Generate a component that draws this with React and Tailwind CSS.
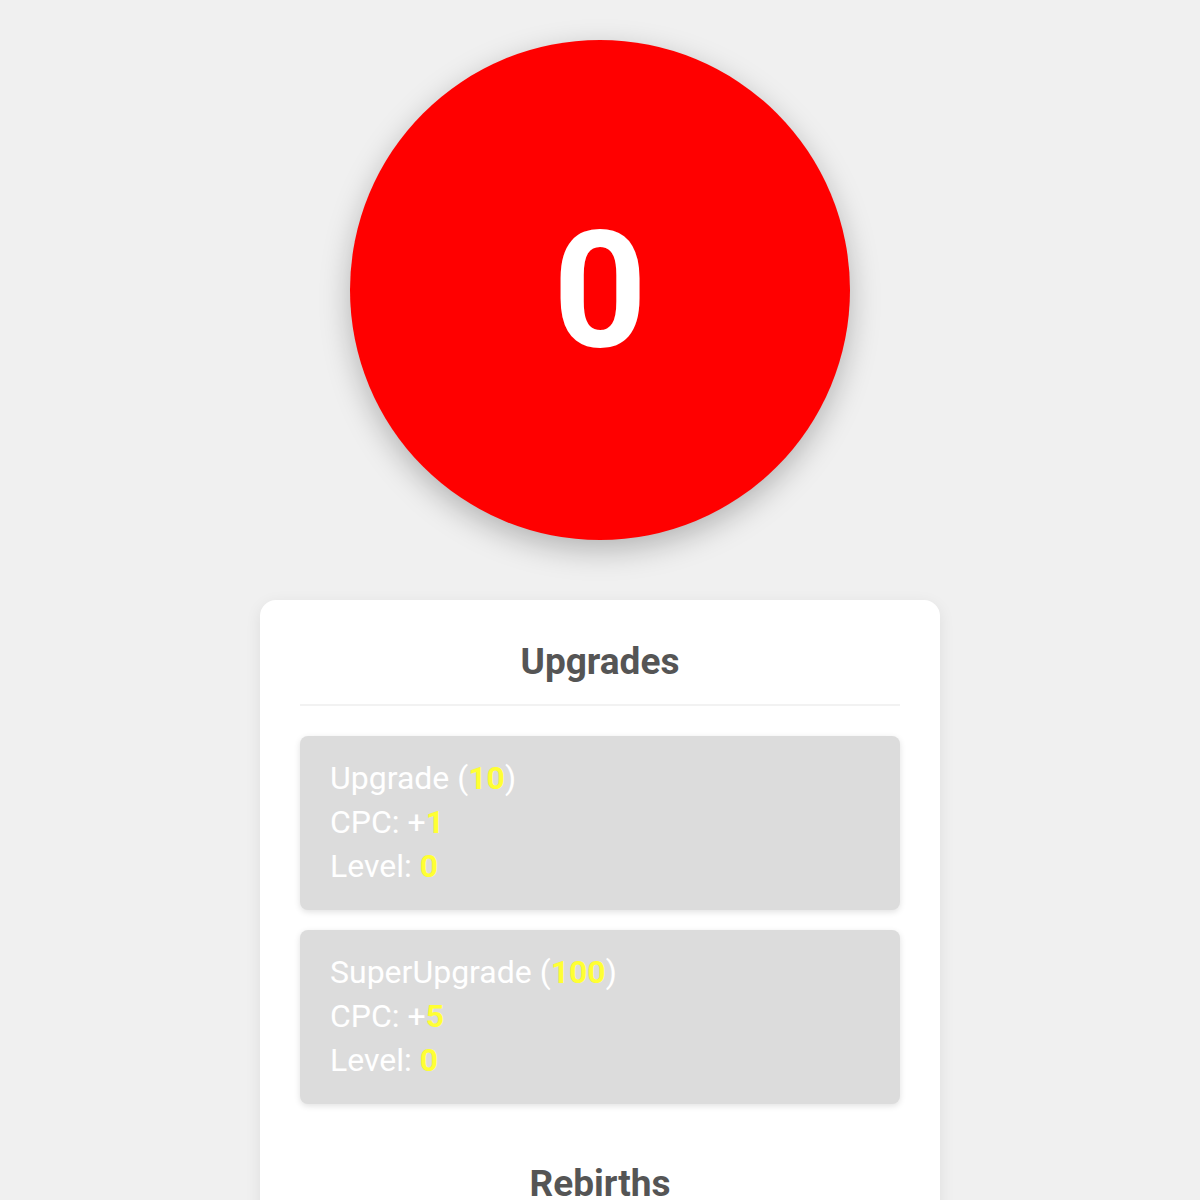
import React from 'react';

const UpgradeBox = ({ name, cost, cpc, level }) => (
    <div className="bg-[#dcdcdc] rounded-lg px-[30px] pt-[20px] pb-[22px] text-white text-[32px] leading-[44px] shadow-[0_2px_6px_rgba(0,0,0,0.12)]">
        <div>
            {name} (<span className="font-bold text-[#ffff33]">{cost}</span>)
        </div>
        <div>
            CPC: +<span className="font-bold text-[#ffff33]">{cpc}</span>
        </div>
        <div>
            Level: <span className="font-bold text-[#ffff33]">{level}</span>
        </div>
    </div>
);

export default function App() {
    return (
        <div
            className="min-h-screen bg-[#f0f0f0] flex flex-col items-center pt-[40px] pb-10"
            style={{ fontFamily: 'Roboto, "Liberation Sans", sans-serif' }}
        >
            <button className="w-[500px] h-[500px] rounded-full bg-[#ff0000] flex items-center justify-center shadow-[0_10px_30px_rgba(0,0,0,0.25)]">
                <span className="text-white font-bold text-[164px] leading-none">0</span>
            </button>

            <div className="mt-[60px] w-[680px] bg-white rounded-2xl shadow-[0_4px_16px_rgba(0,0,0,0.08)] px-[40px] pt-[40px] pb-10">
                <h2 className="text-[37px] font-bold text-[#555555] text-center leading-[44px] pb-[20px] border-b-2 border-[#f2f2f2]">
                    Upgrades
                </h2>
                <div className="mt-[30px] flex flex-col gap-[20px]">
                    <UpgradeBox name="Upgrade" cost="10" cpc="1" level="0" />
                    <UpgradeBox name="SuperUpgrade" cost="100" cpc="5" level="0" />
                </div>
                <h2 className="mt-[58px] text-[37px] font-bold text-[#555555] text-center leading-[44px] pb-[20px] border-b-2 border-[#f2f2f2]">
                    Rebirths
                </h2>
                <div className="h-40" />
            </div>
        </div>
    );
}
